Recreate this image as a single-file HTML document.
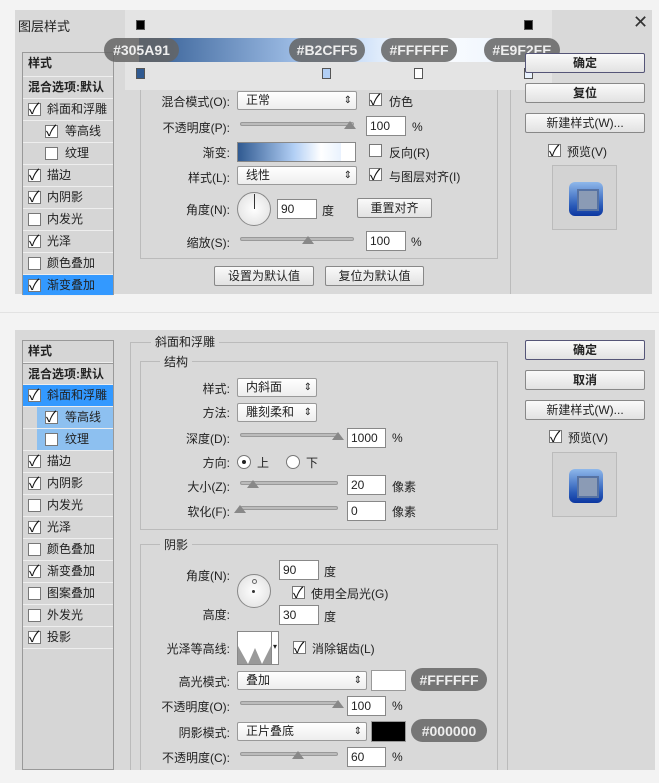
<!DOCTYPE html>
<html><head><meta charset="utf-8"><style>
*{box-sizing:border-box;margin:0;padding:0}
body{width:659px;height:783px;background:#f3f3f3;font-family:"Liberation Sans","Noto Sans CJK SC",sans-serif;font-size:12px;color:#222;position:relative;overflow:hidden}
.a{position:absolute}
.dlg{background:#d9d9d9}
.lst{background:#d6d6d6;border:1px solid #999}
.row{position:absolute;left:0;width:100%;height:22px;border-bottom:1px solid #eee;line-height:21px;padding-left:24px;white-space:nowrap}
.cb{position:absolute;width:13px;height:13px;border:1px solid #777;background:#fff;top:4px}
.cb.k::after{content:"✓";position:absolute;left:0px;top:-5px;font-size:15px;color:#111}
.btn{position:absolute;height:20px;border:1px solid #888;border-radius:2px;background:linear-gradient(#fafafa,#e2e2e2);text-align:center;line-height:18px}
.lab{position:absolute;text-align:right;width:120px;white-space:nowrap}
.inp{position:absolute;height:20px;border:1px solid #888;background:#fff;padding-left:3px;line-height:18px}
.sel{position:absolute;height:19px;border:1px solid #999;border-radius:2px;background:linear-gradient(#fff,#eee);padding-left:8px;line-height:17px}
.sel::after{content:"⇕";position:absolute;right:4px;top:0;font-size:10px}
.sl{position:absolute;height:4px;border:1px solid #999;background:#bbb;border-radius:2px}
.th{position:absolute;width:0;height:0;border-left:6px solid transparent;border-right:6px solid transparent;border-bottom:8px solid #888}
.fs{position:absolute;border:1px solid #bbb}
.lg{position:absolute;background:#d9d9d9;padding:0 4px;white-space:nowrap}
.pill{position:absolute;height:24px;border-radius:12px;background:rgba(100,100,100,.85);color:#eee;font-weight:bold;font-size:14px;line-height:24px;text-align:center}
.prev{position:absolute;width:65px;height:65px;background:#d3d3d3;border:1px solid #bbb}
.prev div{position:absolute;left:16px;top:16px;width:34px;height:34px;border-radius:6px;background:linear-gradient(#8fb8ea,#2a5bb8 70%,#0b36a0)}
.prev div::after{content:"";position:absolute;left:8px;top:7px;width:18px;height:18px;background:#8b9bb5;border:2px solid #5672a3}
.rad{position:absolute;width:14px;height:14px;border:1px solid #777;border-radius:50%;background:#fff}
</style></head><body>

<div class="a dlg" style="left:15px;top:10px;width:637px;height:284px"></div>
<div class="a" style="left:18px;top:16px;font-size:13px">图层样式</div>
<div class="a" style="left:633px;top:12px;font-size:18px;color:#333">✕</div>
<div class="a" style="left:510px;top:30px;width:1px;height:264px;background:#bbb"></div>
<div class="a lst" style="left:22px;top:52px;width:92px;height:243px">
 <div class="row" style="top:0;padding-left:5px;height:24px;font-weight:bold">样式</div>
 <div class="row" style="top:24px;padding-left:5px;font-weight:bold">混合选项:默认</div>
 <div class="row" style="top:46px"><span class="cb k" style="left:5px"></span>斜面和浮雕</div>
 <div class="row" style="top:68px;padding-left:42px"><span class="cb k" style="left:22px"></span>等高线</div>
 <div class="row" style="top:90px;padding-left:42px"><span class="cb" style="left:22px"></span>纹理</div>
 <div class="row" style="top:112px"><span class="cb k" style="left:5px"></span>描边</div>
 <div class="row" style="top:134px"><span class="cb k" style="left:5px"></span>内阴影</div>
 <div class="row" style="top:156px"><span class="cb" style="left:5px"></span>内发光</div>
 <div class="row" style="top:178px"><span class="cb k" style="left:5px"></span>光泽</div>
 <div class="row" style="top:200px"><span class="cb" style="left:5px"></span>颜色叠加</div>
 <div class="row" style="top:222px;background:#3399ff;height:21px"><span class="cb k" style="left:5px"></span>渐变叠加</div>
</div>
<div class="fs" style="left:140px;top:84px;width:358px;height:175px"></div>
<div class="a" style="left:125px;top:10px;width:427px;height:80px;background:#e4e4e4"></div>
<div class="a" style="left:139px;top:38px;width:391px;height:24px;background:linear-gradient(90deg,#305A91,#B2CFF5 48%,#fff 71%,#E9F2FE)"></div>
<div class="a" style="left:136px;top:20px;width:9px;height:10px;background:#000;border:1px solid #555"></div>
<div class="a" style="left:524px;top:20px;width:9px;height:10px;background:#000;border:1px solid #555"></div>
<div class="a" style="left:136px;top:68px;width:9px;height:11px;background:#305A91;border:1px solid #555"></div>
<div class="a" style="left:322px;top:68px;width:9px;height:11px;background:#B2CFF5;border:1px solid #555"></div>
<div class="a" style="left:414px;top:68px;width:9px;height:11px;background:#fff;border:1px solid #555"></div>
<div class="a" style="left:524px;top:68px;width:9px;height:11px;background:#E9F2FE;border:1px solid #555"></div>
<div class="pill" style="left:104px;top:38px;width:75px">#305A91</div>
<div class="pill" style="left:289px;top:38px;width:76px">#B2CFF5</div>
<div class="pill" style="left:381px;top:38px;width:76px">#FFFFFF</div>
<div class="pill" style="left:484px;top:38px;width:76px">#E9F2FE</div>

<div class="lab" style="left:110px;top:93px">混合模式(O):</div>
<div class="sel" style="left:237px;top:91px;width:120px">正常</div>
<div class="cb k" style="left:369px;top:93px"></div><div class="a" style="left:389px;top:93px">仿色</div>
<div class="lab" style="left:110px;top:119px">不透明度(P):</div>
<div class="sl" style="left:240px;top:122px;width:114px"></div><div class="th" style="left:344px;top:121px"></div>
<div class="inp" style="left:366px;top:116px;width:40px">100</div><div class="a" style="left:412px;top:120px">%</div>
<div class="lab" style="left:110px;top:144px">渐变:</div>
<div class="a" style="left:237px;top:142px;width:119px;height:20px;border:1px solid #888;background:linear-gradient(90deg,#305A91,#B2CFF5 48%,#fff 71%,#E9F2FE 88%,#fff 88%)"></div>
<div class="cb" style="left:369px;top:144px"></div><div class="a" style="left:389px;top:144px">反向(R)</div>
<div class="lab" style="left:110px;top:169px">样式(L):</div>
<div class="sel" style="left:237px;top:166px;width:120px">线性</div>
<div class="cb k" style="left:369px;top:168px"></div><div class="a" style="left:389px;top:168px">与图层对齐(I)</div>
<div class="lab" style="left:110px;top:201px">角度(N):</div>
<div class="a" style="left:237px;top:192px;width:34px;height:34px;border:1px solid #888;border-radius:50%;background:radial-gradient(#fff,#ddd)"></div>
<div class="a" style="left:254px;top:194px;width:1px;height:15px;background:#333"></div>
<div class="inp" style="left:277px;top:199px;width:40px">90</div><div class="a" style="left:322px;top:202px">度</div>
<div class="btn" style="left:357px;top:198px;width:75px">重置对齐</div>
<div class="lab" style="left:110px;top:234px">缩放(S):</div>
<div class="sl" style="left:240px;top:237px;width:114px"></div><div class="th" style="left:302px;top:236px"></div>
<div class="inp" style="left:366px;top:231px;width:40px">100</div><div class="a" style="left:411px;top:235px">%</div>
<div class="btn" style="left:214px;top:266px;width:100px">设置为默认值</div>
<div class="btn" style="left:325px;top:266px;width:99px">复位为默认值</div>

<div class="btn" style="left:525px;top:53px;width:120px;border-color:#557;font-weight:bold">确定</div>
<div class="btn" style="left:525px;top:83px;width:120px;font-weight:bold">复位</div>
<div class="btn" style="left:525px;top:113px;width:120px">新建样式(W)...</div>
<div class="cb k" style="left:548px;top:144px"></div><div class="a" style="left:567px;top:143px">预览(V)</div>
<div class="prev" style="left:552px;top:165px"><div></div></div>

<div class="a" style="left:0;top:312px;width:659px;height:1px;background:#e2e2e2"></div>
<div class="a dlg" style="left:15px;top:330px;width:640px;height:440px"></div>
<div class="a lst" style="left:22px;top:340px;width:92px;height:430px">
 <div class="row" style="top:0;padding-left:5px;font-weight:bold">样式</div>
 <div class="row" style="top:22px;padding-left:5px;font-weight:bold;border-top:1px solid #999">混合选项:默认</div>
 <div class="row" style="top:44px;background:#3399ff"><span class="cb k" style="left:5px"></span>斜面和浮雕</div>
 <div class="row" style="top:66px;padding-left:42px;background:linear-gradient(90deg,#d6d6d6 14px,#8dc0f0 14px)"><span class="cb k" style="left:22px"></span>等高线</div>
 <div class="row" style="top:88px;padding-left:42px;background:linear-gradient(90deg,#d6d6d6 14px,#8dc0f0 14px)"><span class="cb" style="left:22px"></span>纹理</div>
 <div class="row" style="top:110px"><span class="cb k" style="left:5px"></span>描边</div>
 <div class="row" style="top:132px"><span class="cb k" style="left:5px"></span>内阴影</div>
 <div class="row" style="top:154px"><span class="cb" style="left:5px"></span>内发光</div>
 <div class="row" style="top:176px"><span class="cb k" style="left:5px"></span>光泽</div>
 <div class="row" style="top:198px"><span class="cb" style="left:5px"></span>颜色叠加</div>
 <div class="row" style="top:220px"><span class="cb k" style="left:5px"></span>渐变叠加</div>
 <div class="row" style="top:242px"><span class="cb" style="left:5px"></span>图案叠加</div>
 <div class="row" style="top:264px"><span class="cb" style="left:5px"></span>外发光</div>
 <div class="row" style="top:286px"><span class="cb k" style="left:5px"></span>投影</div>
</div>
<div class="fs" style="left:130px;top:342px;width:378px;height:428px;border-bottom:none"></div>
<div class="lg" style="left:151px;top:333px">斜面和浮雕</div>
<div class="fs" style="left:140px;top:361px;width:358px;height:169px"></div>
<div class="lg" style="left:160px;top:353px">结构</div>
<div class="lab" style="left:110px;top:380px">样式:</div>
<div class="sel" style="left:237px;top:378px;width:80px">内斜面</div>
<div class="lab" style="left:110px;top:404px">方法:</div>
<div class="sel" style="left:237px;top:403px;width:80px">雕刻柔和</div>
<div class="lab" style="left:110px;top:430px">深度(D):</div>
<div class="sl" style="left:240px;top:433px;width:98px"></div><div class="th" style="left:332px;top:432px"></div>
<div class="inp" style="left:347px;top:428px;width:39px">1000</div><div class="a" style="left:392px;top:431px">%</div>
<div class="lab" style="left:110px;top:454px">方向:</div>
<div class="rad" style="left:237px;top:455px"><div class="a" style="left:4px;top:4px;width:4px;height:4px;border-radius:50%;background:#222"></div></div>
<div class="a" style="left:257px;top:454px">上</div>
<div class="rad" style="left:286px;top:455px"></div><div class="a" style="left:306px;top:454px">下</div>
<div class="lab" style="left:110px;top:478px">大小(Z):</div>
<div class="sl" style="left:240px;top:481px;width:98px"></div><div class="th" style="left:247px;top:480px"></div>
<div class="inp" style="left:347px;top:475px;width:39px">20</div><div class="a" style="left:392px;top:478px">像素</div>
<div class="lab" style="left:110px;top:503px">软化(F):</div>
<div class="sl" style="left:240px;top:506px;width:98px"></div><div class="th" style="left:234px;top:505px"></div>
<div class="inp" style="left:347px;top:501px;width:39px">0</div><div class="a" style="left:392px;top:503px">像素</div>

<div class="fs" style="left:140px;top:544px;width:358px;height:226px;border-bottom:none"></div>
<div class="lg" style="left:160px;top:536px">阴影</div>
<div class="lab" style="left:110px;top:567px">角度(N):</div>
<div class="a" style="left:237px;top:574px;width:34px;height:34px;border:1px solid #888;border-radius:50%;background:radial-gradient(#fff,#ddd)"><div class="a" style="left:14px;top:15px;width:3px;height:3px;background:#333;border-radius:50%"></div><div class="a" style="left:14px;top:4px;width:5px;height:5px;border:1px solid #666;border-radius:50%"></div></div>
<div class="inp" style="left:279px;top:560px;width:40px">90</div><div class="a" style="left:324px;top:563px">度</div>
<div class="cb k" style="left:292px;top:586px"></div><div class="a" style="left:311px;top:585px">使用全局光(G)</div>
<div class="lab" style="left:110px;top:606px">高度:</div>
<div class="inp" style="left:279px;top:605px;width:40px">30</div><div class="a" style="left:324px;top:608px">度</div>
<div class="lab" style="left:110px;top:640px">光泽等高线:</div>
<div class="a" style="left:237px;top:631px;width:42px;height:34px;border:1px solid #888;background:#fff;overflow:hidden">
<svg width="34" height="34" style="position:absolute;left:0;top:0"><path d="M0 34 L0 14 L10 32 L17 16 L24 32 L33 14 L33 34Z" fill="#999"/></svg>
<div class="a" style="left:33px;top:0;width:1px;height:34px;background:#888"></div><div class="a" style="left:35px;top:10px;font-size:8px">▾</div></div>
<div class="cb k" style="left:293px;top:641px"></div><div class="a" style="left:312px;top:640px">消除锯齿(L)</div>
<div class="lab" style="left:110px;top:673px">高光模式:</div>
<div class="sel" style="left:237px;top:671px;width:130px">叠加</div>
<div class="a" style="left:371px;top:670px;width:35px;height:21px;background:#fff;border:1px solid #999"></div>
<div class="pill" style="left:411px;top:668px;width:76px;height:23px">#FFFFFF</div>
<div class="lab" style="left:110px;top:698px">不透明度(O):</div>
<div class="sl" style="left:240px;top:701px;width:98px"></div><div class="th" style="left:332px;top:700px"></div>
<div class="inp" style="left:347px;top:696px;width:39px">100</div><div class="a" style="left:392px;top:699px">%</div>
<div class="lab" style="left:110px;top:724px">阴影模式:</div>
<div class="sel" style="left:237px;top:722px;width:130px">正片叠底</div>
<div class="a" style="left:371px;top:721px;width:35px;height:21px;background:#000;border:1px solid #999"></div>
<div class="pill" style="left:411px;top:719px;width:76px;height:23px">#000000</div>
<div class="lab" style="left:110px;top:749px">不透明度(C):</div>
<div class="sl" style="left:240px;top:752px;width:98px"></div><div class="th" style="left:292px;top:751px"></div>
<div class="inp" style="left:347px;top:747px;width:39px">60</div><div class="a" style="left:392px;top:750px">%</div>

<div class="btn" style="left:525px;top:340px;width:120px;border-color:#557;font-weight:bold">确定</div>
<div class="btn" style="left:525px;top:370px;width:120px;font-weight:bold">取消</div>
<div class="btn" style="left:525px;top:400px;width:120px">新建样式(W)...</div>
<div class="cb k" style="left:549px;top:430px"></div><div class="a" style="left:568px;top:429px">预览(V)</div>
<div class="prev" style="left:552px;top:452px"><div></div></div>
<div class="a" style="left:0;top:770px;width:659px;height:13px;background:#f3f3f3"></div>
</body></html>
